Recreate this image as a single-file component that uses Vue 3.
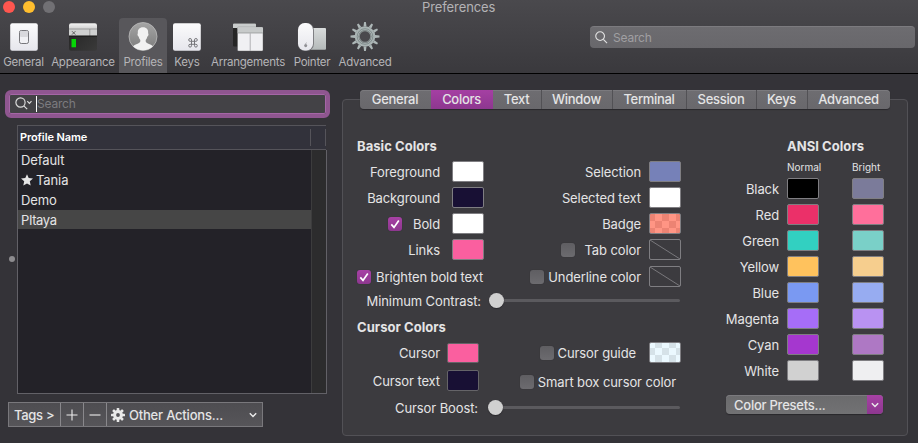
<script setup>
const tools = ['General', 'Appearance', 'Profiles', 'Keys', 'Arrangements', 'Pointer', 'Advanced']
const tabs = ['General', 'Colors', 'Text', 'Window', 'Terminal', 'Session', 'Keys', 'Advanced']
const profiles = [
  { name: 'Default' },
  { name: 'Tania', star: true },
  { name: 'Demo' },
  { name: 'PItaya', selected: true },
]
const basic = [
  { left: 'Foreground', lc: '#ffffff', right: 'Selection', rc: '#7681b8' },
  { left: 'Background', lc: '#181034', right: 'Selected text', rc: '#ffffff' },
  { left: 'Bold', lc: '#ffffff', check: true, right: 'Badge', kind: 'badge' },
  { left: 'Links', lc: '#fa5f9f', right: 'Tab color', kind: 'none', box: true },
]
const ansi = [
  ['Black', '#000000', '#7b7b9a'],
  ['Red', '#eb3069', '#ff6f9b'],
  ['Green', '#32d0c1', '#7ad0c8'],
  ['Yellow', '#ffc25d', '#f6ce8e'],
  ['Blue', '#7a99f2', '#97acf1'],
  ['Magenta', '#a66df7', '#b992f2'],
  ['Cyan', '#a537cf', '#ae78c4'],
  ['White', '#d1d1d1', '#efeff1'],
]
const teeth = Array.from({ length: 12 }, (_, i) => i * 30)
const cogTeeth = Array.from({ length: 8 }, (_, i) => i * 45)
</script>

<template>
  <div class="window">
    <header class="toolbar">
      <div class="titlebar">
        <i class="light close"></i><i class="light mini"></i><i class="light zoom"></i>
        <span class="title">Preferences</span>
      </div>
      <nav class="tools">
        <div v-for="t in tools" :key="t" class="tool" :class="'tool-' + t.toLowerCase()">
          <svg class="tool-icon" viewBox="0 0 32 30">
            <defs>
              <linearGradient id="paper" x1="0" y1="0" x2="0" y2="1"><stop offset="0" stop-color="#fbfbfc" /><stop offset="1" stop-color="#e6e6ec" /></linearGradient>
              <linearGradient id="gray" x1="0" y1="0" x2="0" y2="1"><stop offset="0" stop-color="#a5a5a5" /><stop offset="1" stop-color="#7b7b7b" /></linearGradient>
              <linearGradient id="silver" x1="0" y1="0" x2="0" y2="1"><stop offset="0" stop-color="#f4f4f4" /><stop offset="1" stop-color="#cfcfcf" /></linearGradient>
              <linearGradient id="pad" x1="0" y1="0" x2="0" y2="1"><stop offset="0" stop-color="#d9dcdc" /><stop offset="1" stop-color="#b4b9b9" /></linearGradient>
              <linearGradient id="dark" x1="0" y1="0" x2="1" y2="1"><stop offset="0" stop-color="#222" /><stop offset="1" stop-color="#3a3a3a" /></linearGradient>
            </defs>
            <g v-if="t === 'General'">
              <rect x="2.2" y="1.2" width="27.6" height="27.6" rx="2" fill="url(#paper)" />
              <rect x="11.5" y="8.5" width="9" height="13" rx="1.8" fill="#f1f1f4" stroke="#77777b" />
              <rect x="12" y="9" width="8" height="6" rx="1" fill="#d9d9dd" />
            </g>
            <g v-else-if="t === 'Appearance'">
              <rect x="2" y="1.2" width="28" height="27.6" rx="2" fill="url(#dark)" />
              <path d="M2 7V3.2a2 2 0 0 1 2-2h24a2 2 0 0 1 2 2V7z" fill="url(#silver)" />
              <rect x="2" y="7" width="28" height="7" fill="#cfd0d0" />
              <path d="M2 7h28M22.8 7v7" stroke="#8d8d8d" stroke-width=".8" />
              <path d="M5 9.2l3.4 3.4M8.4 9.2L5 12.600" stroke="#555" stroke-width=".9" />
              <path d="M2 14h28" stroke="#111" />
              <rect x="4.500" y="17" width="4.500" height="8.300" fill="#06d606" />
            </g>
            <g v-else-if="t === 'Profiles'">
              <circle cx="16" cy="14.500" r="14" fill="url(#gray)" stroke="#b9b9b9" stroke-width=".8" />
              <path d="M16 5.200c-3.600 0-5.600 2.400-5.100 6-.9.400-.2 2.900.7 3.200.3 1.500.9 2.700 1.700 3.600.2 2.200-.5 2.900-2.700 3.700-1.700.6-3.500 1.200-4.600 2.500 2.500 2.600 6 4 10 4s7.500-1.400 10-4c-1.100-1.300-2.900-1.900-4.600-2.500-2.200-.8-2.900-1.500-2.700-3.700.8-.9 1.400-2.100 1.700-3.600.9-.3 1.600-2.800.7-3.200.5-3.600-1.500-6-5.100-6z" fill="#f1f1f1" />
            </g>
            <g v-else-if="t === 'Keys'">
              <rect x="2" y="1.200" width="27.800" height="27.600" rx="2" fill="url(#paper)" />
              <path d="M20.500 19.300v-1.400a1.400 1.400 0 1 0-1.400 1.400h5.800a1.400 1.400 0 1 0-1.400-1.400v5.800a1.400 1.400 0 1 0 1.400-1.400h-5.800a1.400 1.400 0 1 0 1.400 1.400z" fill="none" stroke="#77777b" />
            </g>
            <g v-else-if="t === 'Arrangements'">
              <rect x="1" y="1.500" width="23" height="23" rx="1" fill="#262626" />
              <path d="M1 6V2.500a1 1 0 0 1 1-1h21a1 1 0 0 1 1 1V6z" fill="#c9cccc" />
              <rect x="5.500" y="5.200" width="25.500" height="23.800" rx="1" fill="#f0f0f3" stroke="#555" stroke-width=".4" />
              <path d="M5.700 11V6.300a1 1 0 0 1 1-1h23.200a1 1 0 0 1 1 1V11z" fill="#c7caca" />
              <path d="M5.700 11h25.200" stroke="#8e9090" stroke-width=".7" />
              <path d="M18.200 11v18" stroke="#b0b0b4" />
            </g>
            <g v-else-if="t === 'Pointer'">
              <rect x="14" y="6" width="16" height="21.800" rx="1" fill="url(#pad)" />
              <rect x="1.900" y="1" width="16" height="28" rx="7" fill="#77777b" />
              <rect x="2" y="1" width="15" height="27.600" rx="6.800" fill="url(#paper)" />
              <ellipse cx="9.700" cy="23.600" rx="1.500" ry="1.600" fill="#909095" />
              <path d="M9.700 22q0-1 .8-1.300" stroke="#909095" stroke-width=".7" fill="none" />
            </g>
            <g v-else>
              <path v-for="a in teeth" :key="a" :transform="`rotate(${a} 16 14.500)`" d="M14.500 4.500l.6-4.500h1.800l.6 4.500z" fill="#adb7b7" />
              <circle cx="16" cy="14.500" r="8.300" fill="#56565a" stroke="#a9b3b3" stroke-width="4" />
              <circle cx="16" cy="14.500" r="7.800" fill="none" stroke="#7d8989" stroke-width=".9" />
              <circle cx="16" cy="14.500" r="5.800" fill="#4a494d" stroke="#879090" stroke-width="1.200" />
            </g>
          </svg>
          <span class="tool-name">{{ t }}</span>
        </div>
        <div class="field top-search">
          <svg class="lens" viewBox="0 0 14 14"><circle cx="5.500" cy="5.500" r="4.700" /><path d="M9 9l4 4" /></svg>
          <span>Search</span>
        </div>
      </nav>
    </header>

    <main class="body">
      <i class="grip"></i>
      <aside class="side">
        <div class="field side-search">
          <svg class="lens-menu" viewBox="0 0 18 14"><circle cx="5.500" cy="5.500" r="4.600" /><path d="M8.800 8.800l3.400 3.400M12.300 4.200l2.100 2.100 2.100-2.100" /></svg>
          <i class="caret"></i><span>Search</span>
        </div>
        <div class="table">
          <div class="thead"><span>Profile Name</span><i class="colsep"></i></div>
          <div class="tbody">
            <ul class="list">
              <li v-for="p in profiles" :key="p.name" :class="{ selected: p.selected }">
                <svg v-if="p.star" class="star" viewBox="0 0 12 12"><path d="M6 .2l1.700 3.900 4.300.4-3.200 2.800.9 4.300L6 9.400l-3.700 2.200.9-4.300L0 4.500l4.300-.4z" /></svg>
                <span>{{ p.name }}</span>
              </li>
            </ul>
            <div class="scroller"></div>
          </div>
        </div>
        <div class="actions">
          <div class="act act-tags">Tags &gt;</div>
          <div class="act act-sign"><svg viewBox="0 0 12 12"><path d="M6 .5v11M.5 6h11" /></svg></div>
          <div class="act act-sign"><svg viewBox="0 0 12 12"><path d="M.5 6h11" /></svg></div>
          <div class="act act-other">
            <svg class="cog" viewBox="0 0 14 14">
              <rect v-for="a in cogTeeth" :key="a" x="5.700" y="0" width="2.600" height="4" rx=".6" :transform="`rotate(${a} 7 7)`" />
              <circle cx="7" cy="7" r="3.400" />
            </svg>
            <span>Other Actions...</span>
            <svg class="chev" viewBox="0 0 8 6"><path d="M.8 1.200L4 4.400l3.200-3.200" /></svg>
          </div>
        </div>
      </aside>

      <section class="pane">
        <div class="tabs">
          <div v-for="t in tabs" :key="t" class="tab" :class="['tab-' + t.toLowerCase(), { active: t === 'Colors' }]"><span>{{ t }}</span></div>
        </div>
        <div class="settings">
          <div class="main-col">
            <h3>Basic Colors</h3>
            <div class="rows">
              <div v-for="r in basic" :key="r.left" class="row">
                <label class="lab checked"><i v-if="r.check" class="check on"><svg viewBox="0 0 14 14"><path d="M3.300 7.400l2.700 3 4.800-6.900" /></svg></i><span>{{ r.left }}</span></label>
                <i class="well" :style="{ background: r.lc }"></i>
                <label class="lab"><i v-if="r.box" class="check"></i><span>{{ r.right }}</span></label>
                <i v-if="!r.kind" class="well" :style="{ background: r.rc }"></i>
                <i v-else-if="r.kind === 'badge'" class="well badge"></i>
                <i v-else class="well empty"><svg viewBox="0 0 30 19"><path d="M0 0l30 19" /></svg></i>
              </div>
            </div>
            <div class="row wide-row">
              <label class="lab start"><i class="check on"><svg viewBox="0 0 14 14"><path d="M3.300 7.400l2.700 3 4.800-6.900" /></svg></i><span>Brighten bold text</span></label>
              <label class="lab tight"><i class="check"></i><span>Underline color</span></label>
              <i class="well empty"><svg viewBox="0 0 30 19"><path d="M0 0l30 19" /></svg></i>
            </div>
            <div class="slide contrast"><span>Minimum Contrast:</span><div class="track"><i class="knob"></i></div></div>
            <h3 class="cursor-head">Cursor Colors</h3>
            <div class="row cursor-row">
              <label class="lab"><span>Cursor</span></label>
              <i class="well pink"></i>
              <label class="lab tight"><i class="check"></i><span>Cursor guide</span></label>
              <i class="well checker"></i>
            </div>
            <div class="row cursor-text-row">
              <label class="lab"><span>Cursor text</span></label>
              <i class="well navy"></i>
              <label class="lab tight"><i class="check"></i><span>Smart box cursor color</span></label>
            </div>
            <div class="slide boost"><span>Cursor Boost:</span><div class="track"><i class="knob"></i></div></div>
          </div>
          <div class="ansi">
            <h3>ANSI Colors</h3>
            <div class="ansi-heads"><span>Normal</span><span>Bright</span></div>
            <div class="rows">
              <div v-for="c in ansi" :key="c[0]" class="ansi-row">
                <label class="lab"><span>{{ c[0] }}</span></label>
                <i class="well" :style="{ background: c[1] }"></i>
                <i class="well" :style="{ background: c[2] }"></i>
              </div>
            </div>
            <div class="presets"><span>Color Presets...</span><b><svg class="chev" viewBox="0 0 8 6"><path d="M.8 1.200L4 4.400l3.200-3.200" /></svg></b></div>
          </div>
        </div>
      </section>
    </main>
  </div>
</template>

<style>
body { margin: 0; background: #343339; overflow: hidden; }
</style>

<style scoped>
* { box-sizing: border-box; }
.window { width: 918px; height: 443px; display: flex; flex-direction: column; background: #343338; font: 13px/16px Inter, "Liberation Sans", sans-serif; letter-spacing: -.1px; color: #e4e4e5; white-space: nowrap; overflow: hidden; }
i { display: block; flex: none; }
svg { display: block; flex: none; }
h3 { margin: 0; font-size: 13px; line-height: 16px; font-weight: 700; letter-spacing: .05px; }

.toolbar { height: 74px; flex: none; background: linear-gradient(#4a494d, #3a393d); border-bottom: 1px solid #000; }
.titlebar { height: 18px; display: flex; align-items: flex-start; padding: 1px 0 0 3px; gap: 8px; }
.light { width: 12px; height: 12px; border-radius: 50%; }
.close { background: #ff564f; }
.mini { background: #ffbe2e; }
.zoom { background: #717074; }
.title { margin: -2px 0 0 359px; color: #b4b3b6; }
.tools { display: flex; height: 55px; }
.tool { display: flex; flex-direction: column; align-items: center; padding-top: 4px; font-size: 11.500px; letter-spacing: -.25px; color: #b5b4b7; }
.tool-icon { width: 32px; height: 30px; }
.tool-name { margin-top: 2px; }
.tool-general { width: 47px; }
.tool-appearance { width: 72px; }
.tool-profiles { width: 48px; background: #58575b; border-radius: 4px 4px 0 0; }
.tool-keys { width: 40px; }
.tool-arrangements { width: 82px; }
.tool-pointer { width: 46px; }
.tool-advanced { width: 60px; }
.field { display: flex; align-items: center; font-size: 12px; letter-spacing: -.2px; }
.top-search { width: 325px; height: 22px; margin: 8px 0 0 195px; padding-left: 5px; gap: 5px; border-radius: 4px; background: linear-gradient(#6d6c70, #68676b); border-top: 1px solid #7c7b7f; color: #a09fa2; }
.lens { width: 13px; height: 13px; fill: none; stroke: #e2e2e2; stroke-width: 1.200; }

.body { display: flex; flex: 1; }
.grip { width: 6px; height: 6px; margin: 182px -7px 0 9px; border-radius: 50%; background: #8d8c8f; }
.side { width: 325px; margin-left: -3px; padding-top: 16px; }
.side-search { height: 28px; border: 4px solid #8f5690; border-radius: 6px; background: #434246; box-shadow: inset 0 0 0 1px #a566a6; padding-left: 6px; color: #7c7b7f; }
.lens-menu { width: 18px; height: 14px; fill: none; stroke: #dcdcdc; stroke-width: 1.200; }
.caret { width: 1px; height: 16px; margin-left: 3px; background: #fff; }
.table { margin: 7px 3px 0 12px; height: 269px; display: flex; flex-direction: column; }
.thead { height: 25px; width: 309px; border: 1px solid #55545a; border-right: 0; background: #32323b; display: flex; align-items: center; justify-content: space-between; padding: 0 0 0 2px; font-size: 11px; font-weight: 600; color: #fff; }
.thead span { margin-top: -1px; }
.colsep { width: 16px; height: 17px; border: solid #55545a; border-width: 0 1px; }
.tbody { flex: 1; display: flex; border: solid #626167; border-width: 0 1px 1px; }
.list { flex: 1; list-style: none; margin: 0; padding: 0; background: #232228; }
.list li { height: 20px; display: flex; align-items: center; padding-left: 3px; gap: 3px; }
.list .selected { background: #464646; border-bottom: 1px solid #232228; letter-spacing: -.4px; }
.list .selected span { padding-top: 1px; }
.star { width: 12px; height: 12px; fill: #e4e4e5; }
.scroller { width: 15px; background: #2c2c2d; border-left: 1px solid #3c3c3d; }
.actions { display: flex; width: 255px; height: 25px; margin: 8px 0 0 3px; border: 1px solid #79787c; background: linear-gradient(#4e4d51, #565559); font-weight: 500; letter-spacing: -.2px; }
.act { display: flex; align-items: center; border-right: 1px solid #89888c; }
.act-tags { width: 52px; padding-left: 5px; letter-spacing: -.3px; }
.act-sign { width: 23px; justify-content: center; }
.act-sign svg { width: 12px; height: 12px; stroke: #ededed; stroke-width: 1.100; }
.act-other { flex: 1; padding: 0 5px 0 4px; gap: 4px; border: 0; }
.cog { width: 14px; height: 14px; fill: #e9e9e9; }
.cog circle { fill: #565559; stroke: #e9e9e9; stroke-width: 3; }
.chev { width: 8px; height: 6px; fill: none; stroke: #ececec; stroke-width: 1.400; }
.act-other .chev { margin-left: auto; }

.pane { width: 566px; height: 337px; margin: 25px 0 0 12px; border: 1px solid #525156; border-radius: 4px; background: #3c3b3f; }
.tabs { display: flex; width: 530px; height: 19px; margin: -10px 0 0 17px; border-radius: 4px; overflow: hidden; background: linear-gradient(#6e6d71, #69686c); box-shadow: 0 1px 1px #29282c, inset 0 1px #7b7a7e; font-weight: 500; letter-spacing: -.3px; }
.tab { display: flex; justify-content: center; align-items: center; padding-right: 1px; border-right: 1px solid #525155; }
.tab span { margin-top: -1px; }
.tab.active { background: linear-gradient(#a540a3, #8d378f); border: 0; }
.tab-general { width: 71px; border: 0; }
.tab-colors { width: 62px; }
.tab-text { width: 49px; }
.tab-window { width: 71px; }
.tab-terminal { width: 74px; }
.tab-session { width: 70px; }
.tab-keys { width: 51px; }
.tab-advanced { width: 82px; border: 0; }
.settings { display: flex; padding: 29px 0 0 14px; gap: 45px; }
.main-col { width: 324px; }
.rows { display: flex; flex-direction: column; gap: 5px; margin-top: 7px; }
.row { height: 21px; display: grid; align-items: center; }
.rows .row { grid-template-columns: 83px 44px 157px 40px; }
.row > .well { justify-self: end; }
.lab { display: flex; justify-content: flex-end; align-items: center; gap: 9px; }
.lab span { padding-top: 1px; }
.checked { gap: 11px; }
.start { justify-content: flex-start; gap: 5px; }
.tight { gap: 4px; }
.well { width: 32px; height: 21px; border: 1px solid #7f7e82; border-radius: 2px; }
.badge { background: repeating-conic-gradient(#ff9584 0 25%, #ec8373 0 50%) -2px 0 / 14px 14px; }
.checker { background: repeating-conic-gradient(#d5e2e8 0 25%, #ebf9ff 0 50%) -2px -2px / 14px 14px; }
.empty svg { width: 30px; height: 19px; stroke: #79787c; fill: none; }
.check { width: 14px; height: 14px; border-radius: 3px; background: linear-gradient(#5f5e62, #6c6b6f); box-shadow: 0 0 1px #2a292d; }
.check.on { background: linear-gradient(#a741a5, #8d378f); }
.check svg { width: 14px; height: 14px; fill: none; stroke: #fff; stroke-width: 1.700; }
.wide-row { margin-top: 6px; grid-template-columns: 127px 157px 40px; }
.slide { display: flex; height: 15px; align-items: center; justify-content: flex-end; }
.slide span { padding-top: 1px; }
.track { height: 3px; border-radius: 2px; background: #5b5a5e; display: flex; align-items: center; margin-right: 1px; }
.knob { width: 15px; height: 15px; border-radius: 50%; background: #d0d0d0; box-shadow: 0 1px 1px #29282c; }
.contrast { margin-top: 6px; }
.contrast .track { width: 191px; margin-left: 8px; }
.cursor-head { margin-top: 11px; }
.cursor-row { margin-top: 7px; grid-template-columns: 83px 39px 157px 45px; }
.cursor-row .pink { height: 20px; }
.cursor-text-row { margin-top: 7px; grid-template-columns: 83px 39px 197px; }
.cursor-text-row .tight { padding-top: 2px; }
.pink { background: #fa5f9f; border-color: #656468; }
.navy { background: #181034; border-color: #656468; }
.boost { margin-top: 9px; }
.boost .track { width: 192px; margin-left: 10px; }

.ansi { width: 160px; }
.ansi h3 { margin-left: 61px; }
.ansi-heads { display: grid; grid-template-columns: 65px 32px; margin: 6px 0 0 61px; font-size: 10px; line-height: 14px; letter-spacing: 0; }
.ansi .rows { margin-top: 4px; }
.ansi-row { display: grid; height: 21px; grid-template-columns: 53px 32px 32px; column-gap: 8px; align-items: center; }
.ansi-row > :last-child { margin-left: 25px; }
.presets { display: flex; width: 157px; height: 19px; margin-top: 14px; border-radius: 4px; overflow: hidden; background: linear-gradient(#6a6a6c, #727274); box-shadow: 0 1px 1px #29282c, inset 0 1px #7b7a7e; align-items: center; justify-content: space-between; padding-left: 8px; font-weight: 500; letter-spacing: -.25px; }
.presets span { padding-top: 1px; }
.presets b { width: 16px; height: 19px; display: flex; align-items: center; justify-content: center; background: linear-gradient(#a741a5, #8d378f); }
</style>
